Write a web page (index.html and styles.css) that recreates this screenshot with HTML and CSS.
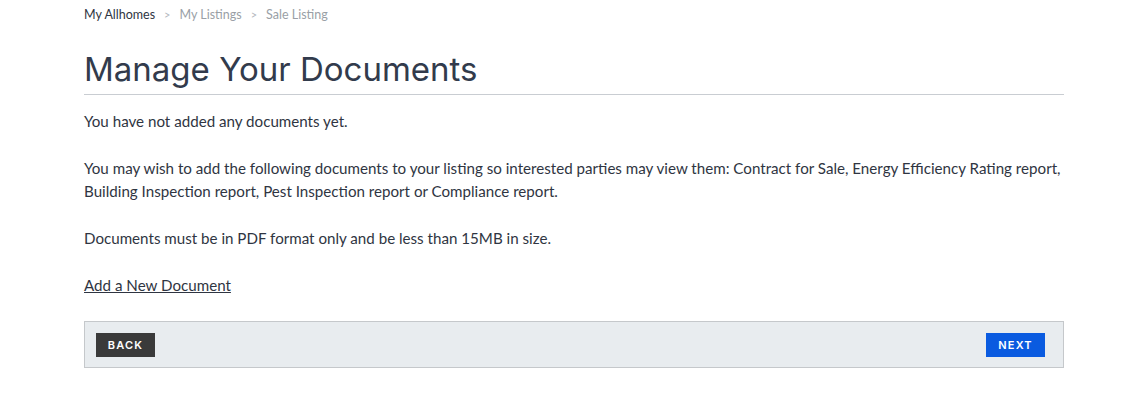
FILE: index.html
```html
<!DOCTYPE html>
<html>
<head>
<meta charset="utf-8">
<link rel="stylesheet" href="styles.css">
</head>
<body>
<div class="page">
  <nav class="crumbs">
    <a class="crumb crumb-home" href="#">My Allhomes</a>
    <span class="sep">&gt;</span>
    <a class="crumb" href="#">My Listings</a>
    <span class="sep">&gt;</span>
    <span class="crumb">Sale Listing</span>
  </nav>
  <h1 class="title">Manage Your Documents</h1>
  <p class="text">You have not added any documents yet.</p>
  <p class="text">You may wish to add the following documents to your listing so interested parties may view them: Contract for Sale, Energy Efficiency Rating report, Building Inspection report, Pest Inspection report or Compliance report.</p>
  <p class="text">Documents must be in PDF format only and be less than 15MB in size.</p>
  <p class="text"><a class="link" href="#">Add a New Document</a></p>
  <div class="actions">
    <button class="btn btn-back">BACK</button>
    <button class="btn btn-next">NEXT</button>
  </div>
</div>
</body>
</html>
```
FILE: styles.css
```css
html, body {
  margin: 0;
  padding: 0;
  background: #fff;
}
body {
  font-family: "Lato", "Liberation Sans", sans-serif;
  color: #2f3542;
}
.page {
  width: 980px;
  margin: 0 auto;
  padding-top: 6px;
}
.crumbs {
  display: flex;
  align-items: center;
  gap: 8px;
  font-size: 12.5px;
  line-height: 18px;
  height: 18px;
}
.crumb {
  color: #9a9fa6;
  text-decoration: none;
}
.crumb-home {
  color: #2f3542;
}
.sep {
  color: #b3b8be;
  font-size: 11px;
  padding: 0 1px;
}
.title {
  font-family: "Inter", "Lato", sans-serif;
  font-weight: 400;
  font-size: 33px;
  line-height: 40px;
  color: #323b4c;
  margin: 25px 0 0;
  padding-bottom: 5px;
  border-bottom: 1px solid #c9cdd2;
}
.text {
  font-size: 15.15px;
  line-height: 23px;
  margin: 15px 0 0;
}
.text + .text {
  margin-top: 24px;
}
.link {
  color: #2f3542;
  text-decoration: underline;
}
.actions {
  margin-top: 24px;
  height: 45px;
  background: #e8ecef;
  border: 1px solid #c5c8cb;
  display: flex;
  justify-content: space-between;
  align-items: center;
  padding: 0 18px 0 11px;
}
.btn {
  border: none;
  height: 24px;
  width: 59px;
  padding: 0;
  font-family: "Inter", "Lato", sans-serif;
  font-size: 11px;
  font-weight: 600;
  letter-spacing: 1.2px;
  color: #fff;
  cursor: pointer;
}
.btn-back {
  background: #3a3a3a;
}
.btn-next {
  background: #0a5be0;
}
```
